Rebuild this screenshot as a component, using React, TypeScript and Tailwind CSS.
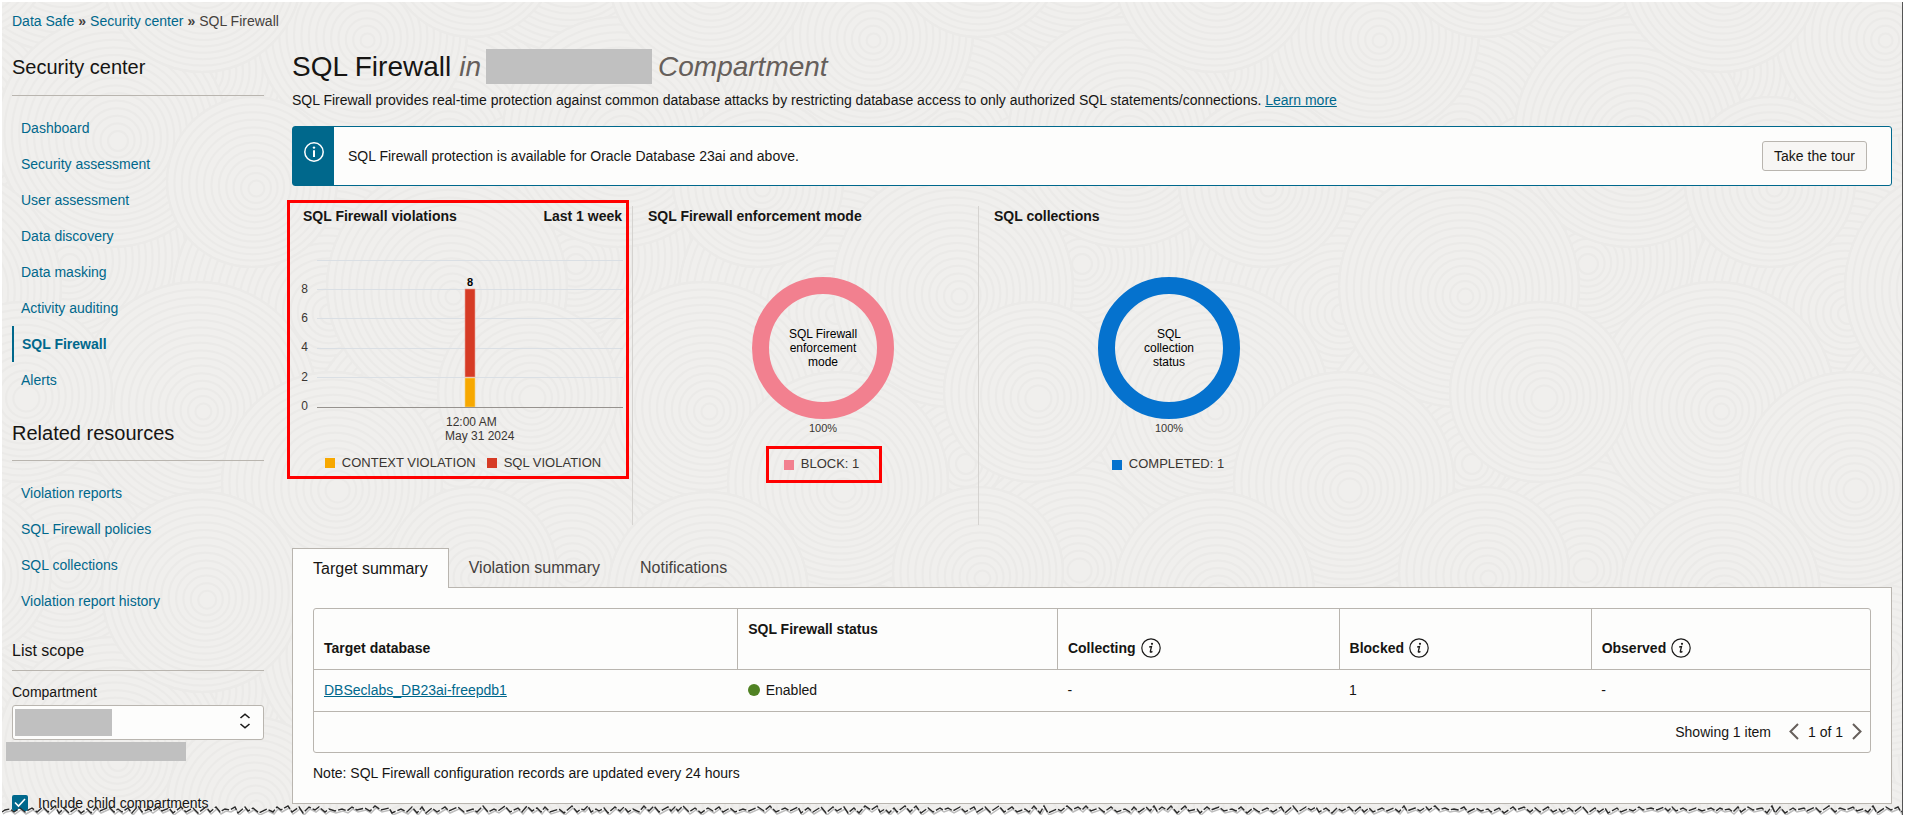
import React from "react";

const TILE_W = 506;
const TILE_H = 620;

const DISCS: [number, number, number][] = [
  [190, 60, 150], [440, 130, 150], [60, 250, 150], [320, 300, 150], [180, 460, 150], [450, 450, 150],
  [60, 560, 110], [360, 30, 105], [110, 130, 115], [250, 180, 85], [445, 285, 120],
  [195, 400, 120], [20, 390, 90], [330, 480, 110], [200, 590, 100], [470, 570, 85],
];

function Backdrop() {
  return (
    <svg className="absolute inset-0 h-full w-full" aria-hidden="true">
      <defs>
        <pattern id="swirl" width={TILE_W} height={TILE_H} patternUnits="userSpaceOnUse">
          <rect width={TILE_W} height={TILE_H} fill="#f0efed" />
          {DISCS.map(([cx, cy, r], i) =>
            [-TILE_W, 0, TILE_W].map((dx) =>
              [-TILE_H, 0, TILE_H].map((dy) => (
                <g key={`${i} ${dx} ${dy}`} fill="none" stroke="#ebeae8" strokeWidth="2">
                  <circle cx={cx + dx} cy={cy + dy} r={r} fill="#f0efed" />
                  {Array.from({ length: Math.floor(r / 7) }, (_, k) => (
                    <circle key={k} cx={cx + dx + k * 0.4} cy={cy + dy + k * 0.6} r={r - k * 7} />
                  ))}
                </g>
              )),
            ),
          )}
        </pattern>
      </defs>
      <rect width="100%" height="100%" fill="url(#swirl)" />
    </svg>
  );
}

const TEAR: string = (() => {
  let seed = 7;
  const rnd = () => {
    seed = (seed * 16807) % 2147483647;
    return seed / 2147483647;
  };
  let d = "M0 9";
  let x = 3;
  while (x < 4000) {
    const low = 7 + Math.round(rnd() * 3);
    const high = 3 + Math.round(rnd() * 3);
    d += ` L${x} ${low}`;
    x += 4 + Math.round(rnd() * 5);
    d += ` L${x} ${high}`;
    x += 3 + Math.round(rnd() * 3);
  }
  return d;
})();

function TornEdge() {
  return (
    <svg className="absolute bottom-0 left-0 h-3 w-full" aria-hidden="true">
      <path d={`${TEAR} L4000 20 L0 20 Z`} fill="#fff" />
      <path d={TEAR} fill="none" stroke="#bdbdbd" strokeWidth="1.5" transform="translate(1 2)" />
      <path d={TEAR} fill="none" stroke="#2a2a2a" strokeWidth="1.4" strokeDasharray="8 2" />
    </svg>
  );
}

function NavList({ items, active }: { items: string[]; active?: string }) {
  return (
    <ul>
      {items.map((t) => (
        <li key={t}>
          <a
            href="#"
            className={
              t === active
                ? "flex h-9 items-center border-l-2 border-[#00688c] pl-2 font-bold text-[#00688c]"
                : "flex h-9 items-center pl-[9px] text-[#00688c]"
            }
          >
            {t}
          </a>
        </li>
      ))}
    </ul>
  );
}

function InfoIcon() {
  return (
    <svg width="20" height="20" viewBox="0 0 20 20" fill="none" stroke="#1b1a19" aria-hidden="true">
      <circle cx="10" cy="10" r="9.2" strokeWidth="1.2" />
      <circle cx="11" cy="5.8" r="1.1" fill="#1b1a19" stroke="none" />
      <path d="M8.2 9 L10.5 8.5 L9.3 13.6 Q9.2 14.9 11.4 13.4" strokeWidth="1.3" />
    </svg>
  );
}

function Sidebar() {
  return (
    <aside className="w-[252px] shrink-0">
      <h2 className="border-b border-[#b9b5af] pb-[14px] pt-1 text-xl">Security center</h2>
      <nav className="pt-[14px]">
        <NavList
          active="SQL Firewall"
          items={["Dashboard", "Security assessment", "User assessment", "Data discovery", "Data masking", "Activity auditing", "SQL Firewall", "Alerts"]}
        />
      </nav>
      <h2 className="mt-[21px] border-b border-[#b9b5af] pb-[13px] text-xl">Related resources</h2>
      <nav className="pt-[14px]">
        <NavList items={["Violation reports", "SQL Firewall policies", "SQL collections", "Violation report history"]} />
      </nav>
      <h3 className="mt-5 border-b border-[#b9b5af] pb-[7px] text-base">List scope</h3>
      <label htmlFor="compartment" className="mt-[11px] block">Compartment</label>
      <div className="relative mt-[3px]">
        <select id="compartment" className="block h-[35px] w-full appearance-none rounded-[3px] border border-[#b9b5af] bg-[#fdfdfc]" defaultValue="">
          <option value="" aria-label="Selected compartment" />
        </select>
        <span className="pointer-events-none absolute left-[3px] top-1 h-[27px] w-[97px] bg-[#c0c0c0]" />
        <svg className="pointer-events-none absolute right-[13px] top-2 h-4 w-3" viewBox="0 0 12 16" fill="none" stroke="#1b1a19" strokeWidth="1.6" aria-hidden="true">
          <path d="M1.5 5 L6 1.2 L10.5 5 M1.5 11 L6 14.8 L10.5 11" />
        </svg>
      </div>
      <div className="-ml-[6px] mt-[2px] h-[19px] w-[180px] bg-[#c0c0c0]" />
      <div className="mt-8 flex h-5 items-center gap-[10px]">
        <span className="relative flex h-4 w-4">
          <input id="children" type="checkbox" defaultChecked className="h-4 w-4 appearance-none rounded-[2px] bg-[#00688c]" />
          <svg className="pointer-events-none absolute inset-0" width="16" height="16" viewBox="0 0 16 16" fill="none" stroke="#fff" strokeWidth="1.6" aria-hidden="true">
            <path d="M3 7.5 L6.5 11 L13 4" />
          </svg>
        </span>
        <label htmlFor="children">Include child compartments</label>
      </div>
    </aside>
  );
}

function ViolationsChart() {
  return (
    <svg className="block" width="342" height="204" viewBox="287 242 342 204" fontSize="12" fill="#3a3632" role="img" aria-label="SQL Firewall violations by day">
      {[260, 289, 318, 348, 377].map((y) => (
        <rect key={y} x="317" y={y} width="306" height="1" fill="#dadfe4" />
      ))}
      {[["8", 293], ["6", 322], ["4", 351], ["2", 381], ["0", 410]].map(([t, y]) => (
        <text key={t} x="308" y={y} textAnchor="end">{t}</text>
      ))}
      <rect x="465" y="289" width="10" height="88" fill="#d63b25" stroke="#eba093" strokeWidth="0.6" />
      <rect x="465" y="378" width="10" height="29" fill="#f7a800" stroke="#f9d27c" strokeWidth="0.6" />
      <rect x="317" y="407" width="306" height="1" fill="#96928e" />
      <text x="470" y="286" fontSize="11" fontWeight="bold" fill="#000" textAnchor="middle">8</text>
      <text x="446" y="426">12:00 AM</text>
      <text x="445" y="440">May 31 2024</text>
    </svg>
  );
}

function Donut({ color, lines }: { color: string; lines: string[] }) {
  return (
    <svg className="block" width="142" height="160" viewBox="-71 -71 142 160" fontSize="12" textAnchor="middle" role="img" aria-label={lines.join(" ")}>
      <circle r="62.5" fill="none" stroke={color} strokeWidth="17" />
      {lines.map((l, i) => (
        <text key={l} y={-10 + i * 14} fill="#000">{l}</text>
      ))}
      <text y="84" fontSize="11" fill="#3a3632">100%</text>
    </svg>
  );
}

function DonutCard({ title, color, square, lines, legend, marked, divided }: {
  title: string; color: string; square: string; lines: string[]; legend: string; marked?: boolean; divided?: boolean;
}) {
  return (
    <section className={divided ? "flex w-[346px] flex-col items-center border-r border-[#d5d3d0]" : "flex w-[346px] flex-col items-center"}>
      <h3 className="w-full pl-[15px] font-bold leading-5">{title}</h3>
      <div className="ml-[34px] mt-[51px]">
        <Donut color={color} lines={lines} />
      </div>
      <div className={marked ? "ml-[36px] mt-[9px] flex h-[37px] w-[116px] items-center justify-center gap-[7px] border-[3px] border-[#ff0000] pr-1" : "ml-[36px] mt-[9px] flex h-[37px] items-center justify-center gap-[7px] pr-1"}>
        <span className={square} />
        <span className="text-[13px] text-[#3a3632]">{legend}</span>
      </div>
    </section>
  );
}

const TH = "h-[60px] border-[#b9b5af] px-[10px] pb-[11px] text-left align-bottom font-bold";

function TargetTable() {
  return (
    <div className="rounded-[3px] border border-[#b9b5af]">
      <table className="w-full table-fixed border-collapse">
        <colgroup>
          <col className="w-[27.23%]" />
          <col className="w-[20.55%]" />
          <col className="w-[18.1%]" />
          <col className="w-[16.2%]" />
          <col />
        </colgroup>
        <thead>
          <tr className="border-b border-[#b9b5af]">
            <th className={`${TH} border-r`}>Target database</th>
            <th className="border-r border-[#b9b5af] px-[10px] pt-[10px] text-left align-top font-bold">SQL Firewall status</th>
            <th className={`${TH} border-r`}><span className="flex items-center gap-[5px]">Collecting <InfoIcon /></span></th>
            <th className={`${TH} border-r`}><span className="flex items-center gap-[5px]">Blocked <InfoIcon /></span></th>
            <th className={TH}><span className="flex items-center gap-[5px]">Observed <InfoIcon /></span></th>
          </tr>
        </thead>
        <tbody>
          <tr className="h-[42px] border-b border-[#b9b5af]">
            <td className="px-[10px]"><a href="#" className="text-[#00688c] underline">DBSeclabs_DB23ai-freepdb1</a></td>
            <td className="px-[10px]"><span className="flex items-center gap-[6px]"><span className="h-3 w-3 rounded-full bg-[#508223]" />Enabled</span></td>
            <td className="px-[10px]">-</td>
            <td className="px-[10px]">1</td>
            <td className="px-[10px]">-</td>
          </tr>
        </tbody>
      </table>
      <div className="flex h-10 items-center justify-end pr-2">
        <span className="mr-[18px]">Showing 1 item</span>
        <button type="button" aria-label="Previous page">
          <svg className="block" width="10" height="17" viewBox="0 0 10 17" fill="none" stroke="#665f5b" strokeWidth="2"><path d="M9 1 L1.5 8.5 L9 16" /></svg>
        </button>
        <span className="mx-[9px]">1 of 1</span>
        <button type="button" aria-label="Next page">
          <svg className="block" width="10" height="17" viewBox="0 0 10 17" fill="none" stroke="#665f5b" strokeWidth="2"><path d="M1 1 L8.5 8.5 L1 16" /></svg>
        </button>
      </div>
    </div>
  );
}

export default function App() {
  return (
    <div className="bg-white pb-2 pl-[2px] pr-[3px] pt-[2px] font-['Liberation_Sans',Arial,sans-serif] text-sm text-[#161513]">
      <div className="relative overflow-hidden border-r border-[#555]">
        <Backdrop />
        <div className="relative pb-[2px] pl-[10px] pr-[10px] pt-[9px]">
          <nav className="flex gap-1 text-[#45413d]" aria-label="Breadcrumb">
            <a href="#" className="text-[#00688c]">Data Safe</a>
            <b>»</b>
            <a href="#" className="text-[#00688c]">Security center</a>
            <b>»</b>
            <span>SQL Firewall</span>
          </nav>
          <div className="mt-[18px] flex gap-7">
            <Sidebar />
            <main className="min-w-0 flex-1">
              <h1 className="flex h-[35px] items-center text-[28px] leading-8">
                SQL Firewall
                <em className="ml-2 text-[#665f5b]">in</em>
                <span className="ml-[5px] h-[35px] w-[166px] bg-[#c0c0c0]" />
                <em className="ml-[6px] text-[#665f5b]">Compartment</em>
              </h1>
              <p className="mt-[6px]">
                SQL Firewall provides real-time protection against common database attacks by restricting database access to only authorized SQL statements/connections.{" "}
                <a href="#" className="text-[#00688c] underline">Learn more</a>
              </p>
              <div className="mt-4 flex h-[60px] items-center rounded-[3px] border border-[#00688c] bg-[#fdfdfc] pr-6">
                <div className="flex h-full w-[41px] justify-center bg-[#00688c] pt-[15px]">
                  <svg width="20" height="20" viewBox="0 0 20 20" fill="none" stroke="#fff" aria-hidden="true">
                    <circle cx="10" cy="10" r="9.2" strokeWidth="1.5" />
                    <path d="M10 8.3 V15" strokeWidth="2" />
                    <circle cx="10" cy="5.6" r="1.2" fill="#fff" stroke="none" />
                  </svg>
                </div>
                <span className="flex-1 pl-[14px]">SQL Firewall protection is available for Oracle Database 23ai and above.</span>
                <button type="button" className="h-[30px] rounded-[3px] border border-[#b9b5af] bg-[#f7f6f4] px-[11px]">Take the tour</button>
              </div>
              <div className="mt-5 flex h-[319px]">
                <div className="w-[341px] border-r border-[#d5d3d0]">
                  <section className="-ml-[5px] -mt-[6px] h-[279px] w-[342px] border-[3px] border-[#ff0000]">
                    <div className="flex h-[39px] justify-between pl-[13px] pr-1 pt-[3px] font-bold leading-5">
                      <h3>SQL Firewall violations</h3>
                      <span>Last 1 week</span>
                    </div>
                    <div className="-ml-[3px]"><ViolationsChart /></div>
                    <div className="flex h-[34px] items-center justify-center gap-[7px] pl-[10px] text-[13px] text-[#3a3632]">
                      <span className="h-[10px] w-[10px] bg-[#f7a800]" />
                      CONTEXT VIOLATION
                      <span className="ml-1 h-[10px] w-[10px] bg-[#d63b25]" />
                      SQL VIOLATION
                    </div>
                  </section>
                </div>
                <DonutCard title="SQL Firewall enforcement mode" color="#f2808f" square="h-[10px] w-[10px] bg-[#f2808f]" lines={["SQL Firewall", "enforcement", "mode"]} legend="BLOCK: 1" marked divided />
                <DonutCard title="SQL collections" color="#0572ce" square="h-[10px] w-[10px] bg-[#0572ce]" lines={["SQL", "collection", "status"]} legend="COMPLETED: 1" />
              </div>
              <div className="mt-[23px] flex items-start text-base text-[#45413d]" role="tablist">
                <button type="button" role="tab" aria-selected="true" className="relative z-10 -mb-px h-10 border border-b-0 border-[#b9b5af] bg-[#fdfdfc] px-5 text-[#161513]">Target summary</button>
                <button type="button" role="tab" className="h-[39px] px-5">Violation summary</button>
                <button type="button" role="tab" className="h-[39px] px-5">Notifications</button>
              </div>
              <div className="border border-[#b9b5af] bg-[#fdfdfc] px-5 pb-5 pt-5">
                <TargetTable />
                <p className="mt-[10px]">Note: SQL Firewall configuration records are updated every 24 hours</p>
              </div>
            </main>
          </div>
        </div>
        <TornEdge />
      </div>
    </div>
  );
}
